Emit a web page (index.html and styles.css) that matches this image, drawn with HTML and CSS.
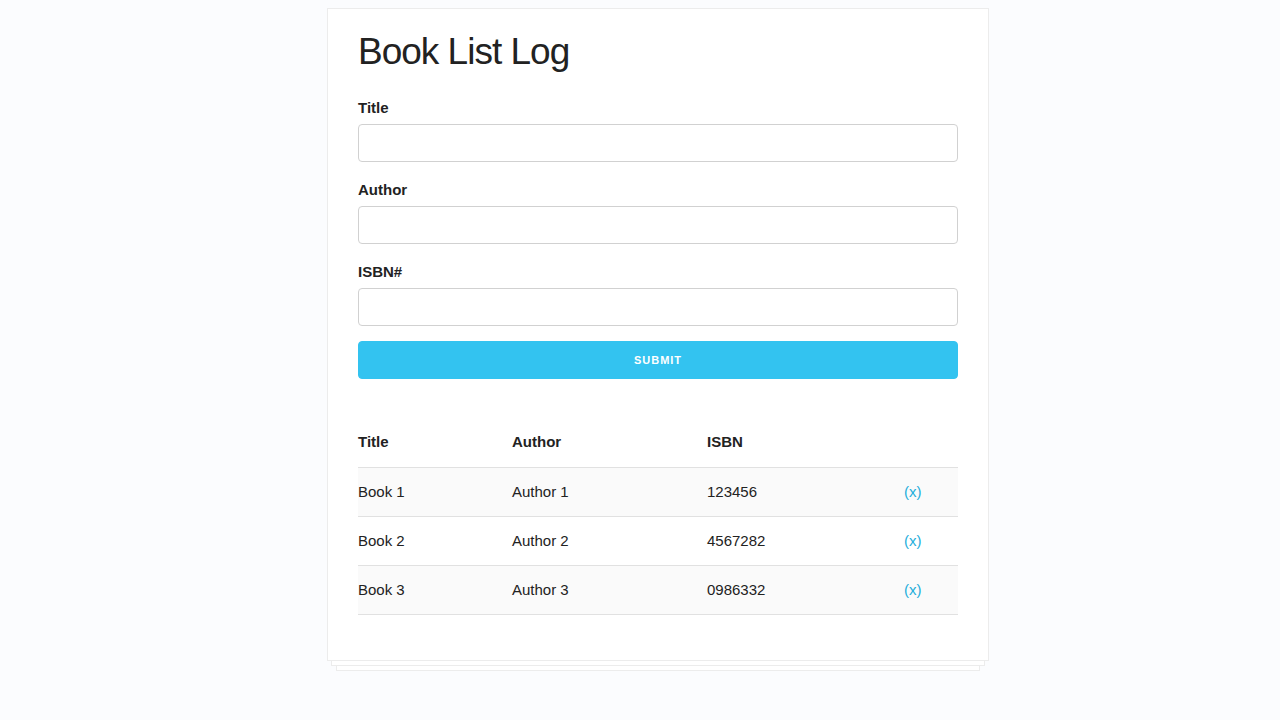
FILE: index.html
```html
<!DOCTYPE html>
<html lang="en">
<head>
<meta charset="utf-8">
<title>Book List Log</title>
<link rel="stylesheet" href="styles.css">
</head>
<body>
<div class="page">
  <div class="stack">
    <main class="card">
      <h1 class="title">Book List Log</h1>
      <form class="book-form">
        <label class="field-label" for="title">Title</label>
        <input class="field-input" type="text" id="title">
        <label class="field-label" for="author">Author</label>
        <input class="field-input" type="text" id="author">
        <label class="field-label" for="isbn">ISBN#</label>
        <input class="field-input field-last" type="text" id="isbn">
        <button class="submit-btn" type="button">Submit</button>
      </form>
      <table class="book-table">
        <colgroup>
          <col class="col-title">
          <col class="col-author">
          <col class="col-isbn">
          <col class="col-del">
        </colgroup>
        <thead>
          <tr><th>Title</th><th>Author</th><th>ISBN</th><th></th></tr>
        </thead>
        <tbody>
          <tr class="striped"><td>Book 1</td><td>Author 1</td><td>123456</td><td><a class="delete" href="#">(x)</a></td></tr>
          <tr><td>Book 2</td><td>Author 2</td><td>4567282</td><td><a class="delete" href="#">(x)</a></td></tr>
          <tr class="striped"><td>Book 3</td><td>Author 3</td><td>0986332</td><td><a class="delete" href="#">(x)</a></td></tr>
        </tbody>
      </table>
    </main>
    <div class="sheet sheet-1"></div>
    <div class="sheet sheet-2"></div>
  </div>
</div>
</body>
</html>
```
FILE: styles.css
```css
* { box-sizing: border-box; }
html, body { margin: 0; padding: 0; }
body {
  background: #fbfcfe;
  font-family: "Liberation Sans", Arial, Helvetica, sans-serif;
  color: #222;
  font-size: 15px;
  line-height: 1.6;
}
.page {
  padding: 8px 0 0 327px;
}
.stack {
  width: 662px;
}
.card {
  background: #fff;
  border: 1px solid #ececec;
  padding: 20px 30px 30px;
}
.title {
  margin: 0 0 21px;
  font-size: 37px;
  font-weight: 400;
  line-height: 46px;
  letter-spacing: -1px;
  color: #222;
}
.book-form {
  display: flex;
  flex-direction: column;
  margin-bottom: 24px;
}
.field-label {
  font-weight: 700;
  font-size: 15px;
  line-height: 24px;
  height: 24px;
  margin-bottom: 4px;
}
.field-input {
  height: 38px;
  width: 100%;
  border: 1px solid #d1d1d1;
  border-radius: 4px;
  background: #fff;
  padding: 6px 10px;
  margin: 0 0 16px;
  font: inherit;
}
.field-input.field-last {
  margin-bottom: 15px;
}
.submit-btn {
  height: 38px;
  width: 100%;
  border: 1px solid #33c3f0;
  background: #33c3f0;
  color: #fff;
  border-radius: 4px;
  font-family: inherit;
  font-size: 11px;
  font-weight: 700;
  letter-spacing: 1px;
  text-transform: uppercase;
  margin: 0 0 15px;
  padding: 0;
}
.book-table {
  width: 100%;
  border-collapse: collapse;
  border-spacing: 0;
  table-layout: fixed;
  margin-bottom: 15px;
}
.col-title { width: 139px; }
.col-author { width: 195px; }
.col-isbn { width: 197px; }
.col-del { width: 69px; }
.book-table th,
.book-table td {
  text-align: left;
  padding: 12px 15px;
  border-bottom: 1px solid #e1e1e1;
  line-height: 24px;
  height: 49px;
  font-size: 15px;
}
.book-table th { font-weight: 700; }
.book-table th:first-child,
.book-table td:first-child { padding-left: 0; }
.book-table th:last-child,
.book-table td:last-child { padding-right: 0; }
.book-table tr.striped td { background: #fafafa; }
.delete {
  color: #1eaedb;
  text-decoration: none;
}
.sheet {
  height: 5px;
  background: #fff;
  border: 1px solid #ececec;
  border-top: none;
}
.sheet-1 { margin: 0 4px; }
.sheet-2 { margin: 0 9px; }
```
